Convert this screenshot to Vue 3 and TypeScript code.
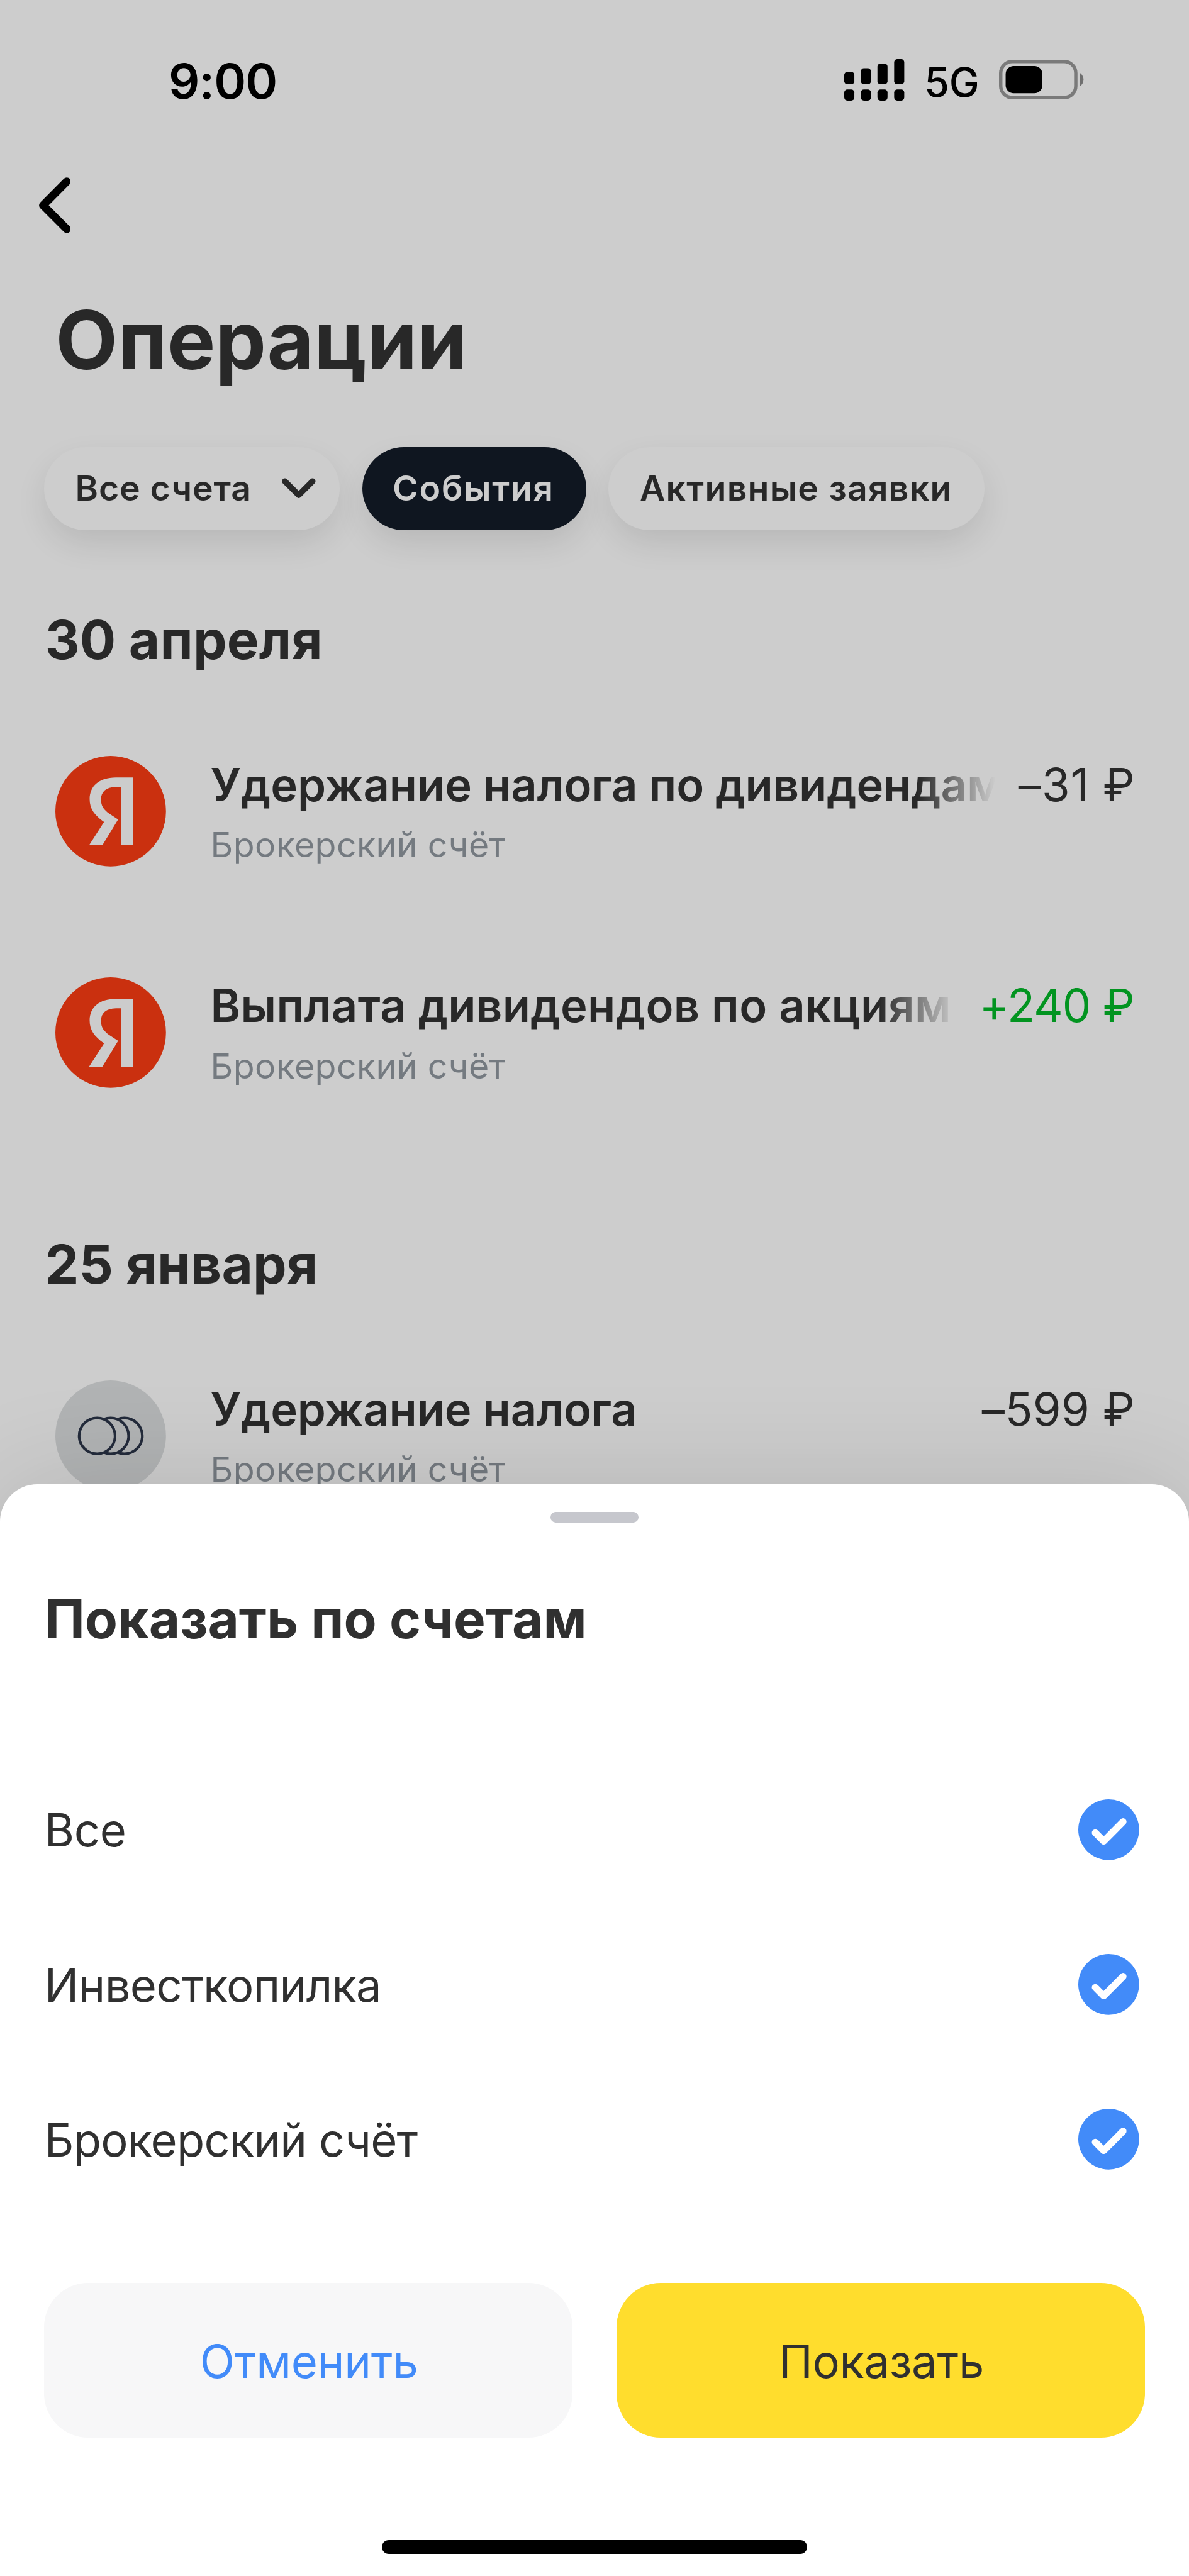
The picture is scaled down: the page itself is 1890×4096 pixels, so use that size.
<script setup lang="ts">
import { ref } from 'vue'

interface Operation {
  id: number
  title: string
  account: string
  amount: string
  income?: boolean
  clipped?: boolean
  icon: 'yandex' | 'coins'
  titleTracking: number
  amountTracking: number
}

interface Section {
  date: string
  operations: Operation[]
}

const sections: Section[] = [
  {
    date: '30 апреля',
    operations: [
      { id: 1, title: 'Удержание налога по дивидендам', account: 'Брокерский счёт', amount: '–31 ₽', clipped: true, icon: 'yandex', titleTracking: -0.02, amountTracking: 0.2 },
      { id: 2, title: 'Выплата дивидендов по акциям', account: 'Брокерский счёт', amount: '+240 ₽', income: true, clipped: true, icon: 'yandex', titleTracking: 0.08, amountTracking: -0.21 },
    ],
  },
  {
    date: '25 января',
    operations: [
      { id: 3, title: 'Удержание налога', account: 'Брокерский счёт', amount: '–599 ₽', icon: 'coins', titleTracking: -0.03, amountTracking: 0.09 },
    ],
  },
]

const signalBars = [
  { x: 0, y: 4.6 },
  { x: 6, y: 3.3 },
  { x: 12, y: 1.6 },
  { x: 18.05, y: 0 },
]

const accounts = ref([
  { name: 'Все', checked: true, tracking: -0.08 },
  { name: 'Инвесткопилка', checked: true, tracking: -0.15 },
  { name: 'Брокерский счёт', checked: true, tracking: -0.175 },
])

// Trailing tracking is pulled back so that every amount ends on the same edge.
function amountStyle(op: Operation) {
  return {
    letterSpacing: `${op.amountTracking}rem`,
    marginRight: `${-op.amountTracking - 0.35}rem`,
  }
}
</script>

<template>
  <div class="screen">
    <header class="status">
      <span class="time">9:00</span>
      <div class="indicators">
        <svg class="signal" viewBox="0 0 21.7 15">
          <g v-for="bar in signalBars" :key="bar.x">
            <rect :x="bar.x" :y="bar.y" width="3.65" :height="9.1 - bar.y" rx="1.1" />
            <rect :x="bar.x" y="11" width="3.65" height="4" rx="1.1" />
          </g>
        </svg>
        <span class="network">5G</span>
        <svg class="battery" viewBox="0 0 31.1 14.3">
          <rect x="0.62" y="0.62" width="27.15" height="13.06" rx="4.2" fill="none" stroke="#7a7a7a" stroke-width="1.24" />
          <rect x="2.4" y="2.3" width="13.3" height="9.8" rx="2.9" />
          <path d="M29.3 4.8a2.9 2.9 0 0 1 0 4.8z" fill="#6f6f6f" />
        </svg>
      </div>
    </header>

    <nav class="nav">
      <svg class="back" viewBox="0 0 11.5 20.2">
        <path d="M10.05 1.5 1.47 10.1l8.58 8.6" fill="none" stroke="#000" stroke-width="2.9" stroke-linecap="round" stroke-linejoin="round" />
      </svg>
    </nav>

    <h1 class="title">Операции</h1>

    <div class="chips">
      <button class="chip chip-accounts">
        <span>Все счета</span>
        <svg class="chevron" viewBox="0 0 12.2 7.4">
          <path d="M1.1 1.2 6.1 6.2l5-5" fill="none" stroke="#282828" stroke-width="2.15" stroke-linecap="round" stroke-linejoin="round" />
        </svg>
      </button>
      <button class="chip chip-events">События</button>
      <button class="chip chip-orders">Активные заявки</button>
    </div>

    <section v-for="section in sections" :key="section.date" class="section">
      <h2 class="date">{{ section.date }}</h2>
      <article v-for="op in section.operations" :key="op.id" class="operation">
        <svg v-if="op.icon === 'yandex'" class="logo" viewBox="0 0 40 40">
          <circle cx="20" cy="20" r="20" fill="#ca300f" />
          <path d="M28 7.8V32.3H23.7V11.2H21.9C18.3 11.2 16.5 13.1 16.5 15.7C16.5 18.2 17.5 19.4 19.4 20.8L22.7 23L17 32.3H12.2L17.6 23.9C14.1 21.4 12.4 19.2 12.4 15.6C12.4 10.9 15.8 7.8 21.9 7.8Z" fill="#cccccc" />
        </svg>
        <svg v-else class="logo" viewBox="0 0 40 40">
          <circle cx="20" cy="20" r="20" fill="#b1b3b4" />
          <g fill="#b1b3b4" stroke="#232b3b" stroke-width="0.95">
            <circle cx="24.95" cy="20.05" r="6.5" />
            <circle cx="20" cy="20.05" r="6.5" />
            <circle cx="15.1" cy="20.05" r="6.5" />
          </g>
        </svg>
        <div class="details">
          <div class="line">
            <span class="name" :class="{ clipped: op.clipped }" :style="{ letterSpacing: op.titleTracking + 'rem' }">{{ op.title }}</span>
            <span class="amount" :class="{ income: op.income }" :style="amountStyle(op)">{{ op.amount }}</span>
          </div>
          <span class="account">{{ op.account }}</span>
        </div>
      </article>
    </section>

    <div class="sheet">
      <div class="grabber"></div>
      <h2 class="sheet-title">Показать по счетам</h2>
      <div class="options">
        <div v-for="account in accounts" :key="account.name" class="option" @click="account.checked = !account.checked">
          <span class="option-name" :style="{ letterSpacing: account.tracking + 'rem' }">{{ account.name }}</span>
          <svg class="check" viewBox="0 0 22 22">
            <circle cx="11" cy="11" r="11" fill="#428bf9" />
            <path v-if="account.checked" d="M6.15 12.1l3.05 3.05 7-7.05" fill="none" stroke="#fff" stroke-width="2.5" stroke-linecap="round" stroke-linejoin="round" />
          </svg>
        </div>
      </div>
      <div class="actions">
        <button class="action cancel">Отменить</button>
        <button class="action confirm">Показать</button>
      </div>
      <div class="home-bar"></div>
    </div>
  </div>
</template>

<style>
/* 1rem is one point of a 430-point-wide phone screen */
html {
  font-size: calc(1890px / 430);
}

body {
  margin: 0;
}
</style>

<style scoped>
.screen {
  position: relative;
  box-sizing: border-box;
  width: 1890px;
  height: 4096px;
  overflow: hidden;
  background: #cdcdcd;
  color: #282828;
  font-family: Inter, 'Liberation Sans', sans-serif;
}

svg {
  display: block;
  flex: none;
}

button {
  border: 0;
  padding: 0;
  font-family: inherit;
}

h1,
h2 {
  margin: 0;
  font-weight: 700;
  white-space: nowrap;
}

.status {
  display: flex;
  align-items: flex-start;
  justify-content: space-between;
  height: 54rem;
  padding: 0 37.6rem 0 61rem;
  color: #000;
}

.time {
  margin-top: 19.5rem;
  font-size: 17.6rem;
  font-weight: 600;
  line-height: 20rem;
  letter-spacing: -0.237rem;
}

.indicators {
  display: flex;
  align-items: flex-start;
  gap: 7.2rem;
}

.signal {
  width: 21.7rem;
  height: 15rem;
  margin-top: 21.3rem;
}

.network {
  margin-top: 20.8rem;
  font-size: 14.6rem;
  font-weight: 500;
  line-height: 18rem;
  letter-spacing: -0.05rem;
}

.battery {
  width: 31.1rem;
  height: 14.3rem;
  margin-top: 21.6rem;
}

.nav {
  display: flex;
  height: 51.2rem;
  padding-left: 14rem;
}

.back {
  width: 11.5rem;
  height: 20.2rem;
  margin-top: 10.2rem;
}

.title {
  padding-left: 20.1rem;
  font-size: 29.2rem;
  line-height: 36rem;
}

.chips {
  display: flex;
  gap: 8.1rem;
  margin: 20.5rem 0 0 15.9rem;
}

.chip {
  display: flex;
  align-items: center;
  box-sizing: border-box;
  height: 30rem;
  border-radius: 15rem;
  background: #cdcdcd;
  box-shadow: 0 5rem 12rem -1rem rgba(0, 0, 0, 0.11);
  color: #282828;
  font-size: 12.6rem;
  font-weight: 600;
  line-height: 16rem;
  white-space: nowrap;
}

.chip-accounts {
  justify-content: space-between;
  width: 107rem;
  padding: 0 8.7rem 0 11.3rem;
  letter-spacing: 0.2rem;
}

.chevron {
  width: 12.2rem;
  height: 7.4rem;
}

.chip-events {
  width: 81rem;
  padding-left: 11rem;
  background: #0f1620;
  color: #cdcdcd;
  letter-spacing: 0.39rem;
}

.chip-orders {
  width: 135.9rem;
  padding-left: 11.3rem;
  letter-spacing: 0.28rem;
}

.section {
  padding-top: 27.8rem;
}

.section + .section {
  padding-top: 32rem;
}

.date {
  padding-left: 16.3rem;
  margin-bottom: 10rem;
  font-size: 19.4rem;
  line-height: 24rem;
  letter-spacing: 0.036rem;
}

.operation {
  display: flex;
  box-sizing: border-box;
  height: 80rem;
  padding: 20rem 20rem 0;
  gap: 16.1rem;
}

.logo {
  width: 40rem;
  height: 40rem;
}

.details {
  flex: 1;
  min-width: 0;
}

.line {
  display: flex;
  gap: 8.3rem;
  padding-top: 0.4rem;
  font-size: 16.45rem;
  line-height: 20rem;
  white-space: nowrap;
}

.name {
  flex: 1;
  min-width: 0;
  overflow: hidden;
  font-weight: 600;
}

.name.clipped {
  mask-image: linear-gradient(to right, #000 calc(100% - 28rem), transparent);
}

.amount {
  flex: none;
}

.amount.income {
  color: #029420;
}

.account {
  display: block;
  margin-top: 3.7rem;
  color: #747a80;
  font-size: 12.6rem;
  line-height: 16rem;
  letter-spacing: 0.1rem;
}

.sheet {
  position: absolute;
  right: 0;
  bottom: 0;
  left: 0;
  display: flex;
  flex-direction: column;
  height: 395rem;
  border-radius: 13.5rem 13.5rem 0 0;
  background: #fff;
  box-shadow: 0 0 40rem rgba(0, 0, 0, 0.12);
  color: #303030;
}

.grabber {
  align-self: center;
  width: 32rem;
  height: 4rem;
  margin-top: 10rem;
  border-radius: 2rem;
  background: #c6c7cd;
}

.sheet-title {
  margin-top: 22.9rem;
  padding-left: 16.2rem;
  font-size: 19.4rem;
  line-height: 24rem;
  letter-spacing: -0.01rem;
}

.options {
  margin-top: 36.1rem;
}

.option {
  display: flex;
  align-items: center;
  justify-content: space-between;
  height: 56rem;
  padding: 0 18rem 0 16.1rem;
  font-size: 16.45rem;
  line-height: 20rem;
}

.option-name {
  padding-top: 0.5rem;
}

.check {
  width: 22rem;
  height: 22rem;
}

.actions {
  display: flex;
  gap: 16rem;
  padding: 24rem 16rem 0;
}

.action {
  flex: 1;
  height: 56rem;
  padding: 0.7rem 0 0 0.5rem;
  border-radius: 16rem;
  font-size: 16.45rem;
  line-height: 20rem;
}

.cancel {
  background: #f7f7f8;
  color: #428bf9;
  letter-spacing: -0.047rem;
}

.confirm {
  background: #ffdd2d;
  color: #303030;
  letter-spacing: -0.068rem;
}

.home-bar {
  align-self: center;
  width: 154rem;
  height: 5rem;
  margin-top: 37rem;
  border-radius: 2.5rem;
  background: #000;
}
</style>
